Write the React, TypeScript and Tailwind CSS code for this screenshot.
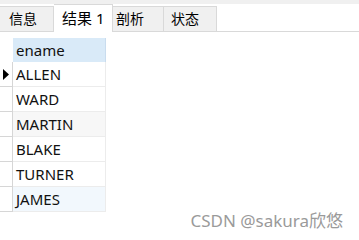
const rows = [
  { name: 'ALLEN', bg: 'bg-white', current: true },
  { name: 'WARD', bg: 'bg-white' },
  { name: 'MARTIN', bg: 'bg-[#f7f7f7]' },
  { name: 'BLAKE', bg: 'bg-white' },
  { name: 'TURNER', bg: 'bg-white' },
  { name: 'JAMES', bg: 'bg-[#f2f8fd]' },
];

const font = { fontFamily: '"Noto Sans", "Noto Sans CJK SC", sans-serif' };

export default function App() {
  return (
    <div className="relative w-[359px] h-[240px] bg-white overflow-hidden text-black" style={font}>
      <div className="h-[4px] bg-[#f0f0f0]" />
      <div className="flex items-end h-[28px] border-b border-[#d9d9d9]">
        <div className="w-[54px] h-[25px] bg-[#f0f0f0] border-t border-r border-[#d9d9d9] flex items-center pl-[9px] text-[14px] leading-none">
          信息
        </div>
        <div className="w-[59px] h-[28px] -mb-px bg-white border-t border-r border-[#d9d9d9] flex items-center pl-[8px] text-[15px] leading-none">
          结果 1
        </div>
        <div className="w-[51px] h-[25px] bg-[#f0f0f0] border-t border-r border-[#d9d9d9] flex items-center pl-[3px] text-[14px] leading-none">
          剖析
        </div>
        <div className="w-[53px] h-[25px] bg-[#f0f0f0] border-t border-r border-[#d9d9d9] flex items-center pl-[7px] text-[14px] leading-none">
          状态
        </div>
      </div>

      <div className="mt-[6px] w-[106px] text-[15px]">
        <div className="flex h-[24px]">
          <div className="w-[13px]" />
          <div className="w-[93px] bg-[#d9eaf8] border-r border-[#c9dcee] flex items-center pl-[3px] text-[#111]">
            ename
          </div>
        </div>
        {rows.map((r) => (
          <div key={r.name} className="flex h-[25px]">
            <div className="w-[13px] border-b border-r border-[#d6d6d6] flex items-center justify-center">
              {r.current && (
                <svg width="6" height="11" viewBox="0 0 6 11">
                  <path d="M0 0 L6 5.5 L0 11 Z" fill="#000" />
                </svg>
              )}
            </div>
            <div className={`w-[93px] ${r.bg} border-b border-r border-[#ececec] flex items-center pl-[3px] text-[#111]`}>
              {r.name}
            </div>
          </div>
        ))}
      </div>

      <div className="absolute right-[16px] top-[209px] text-[17px] leading-[24px] text-[#9a9a9a]">
        CSDN @sakura欣悠
      </div>
    </div>
  );
}
